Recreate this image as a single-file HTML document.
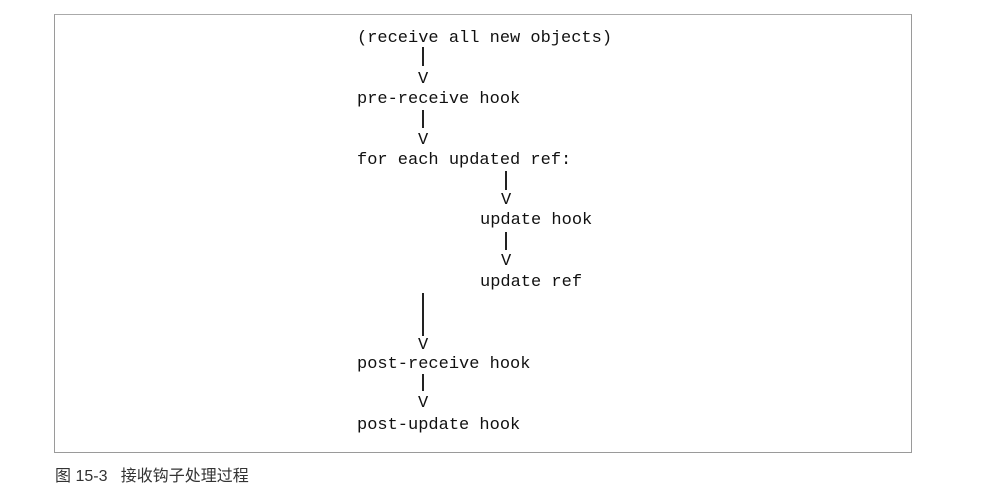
<!DOCTYPE html>
<html><head><meta charset="utf-8"><style>
html,body{margin:0;padding:0;background:#fff;width:1002px;height:498px;overflow:hidden;position:relative}
.box{position:absolute;left:54px;top:14px;width:856px;height:437px;border:1px solid #9a9a9a;border-top-color:#aaa}
.t{position:absolute;font-family:"Liberation Mono",monospace;font-size:17px;line-height:20px;color:#111;white-space:pre}
.b{position:absolute;width:2px;background:#222}
.cap{position:absolute;left:55px;top:466px;font-family:"Liberation Sans","Noto Sans CJK SC",sans-serif;font-size:16px;color:#333;line-height:22px;white-space:pre}
</style></head><body>
<div class="box"></div>
<div class="t" style="left:357px;top:29px">(receive all new objects)</div>
<div class="b" style="left:422px;top:47px;height:19px"></div>
<div class="t" style="left:418px;top:70px">V</div>
<div class="t" style="left:357px;top:90px">pre-receive hook</div>
<div class="b" style="left:422px;top:110px;height:18px"></div>
<div class="t" style="left:418px;top:131px">V</div>
<div class="t" style="left:357px;top:151px">for each updated ref:</div>
<div class="b" style="left:505px;top:171px;height:19px"></div>
<div class="t" style="left:501px;top:191px">V</div>
<div class="t" style="left:480px;top:211px">update hook</div>
<div class="b" style="left:505px;top:232px;height:18px"></div>
<div class="t" style="left:501px;top:252px">V</div>
<div class="t" style="left:480px;top:273px">update ref</div>
<div class="b" style="left:422px;top:293px;height:43px"></div>
<div class="t" style="left:418px;top:336px">V</div>
<div class="t" style="left:357px;top:355px">post-receive hook</div>
<div class="b" style="left:422px;top:374px;height:17px"></div>
<div class="t" style="left:418px;top:394px">V</div>
<div class="t" style="left:357px;top:416px">post-update hook</div>
<div class="cap">图 15-3   接收钩子处理过程</div>
</body></html>
